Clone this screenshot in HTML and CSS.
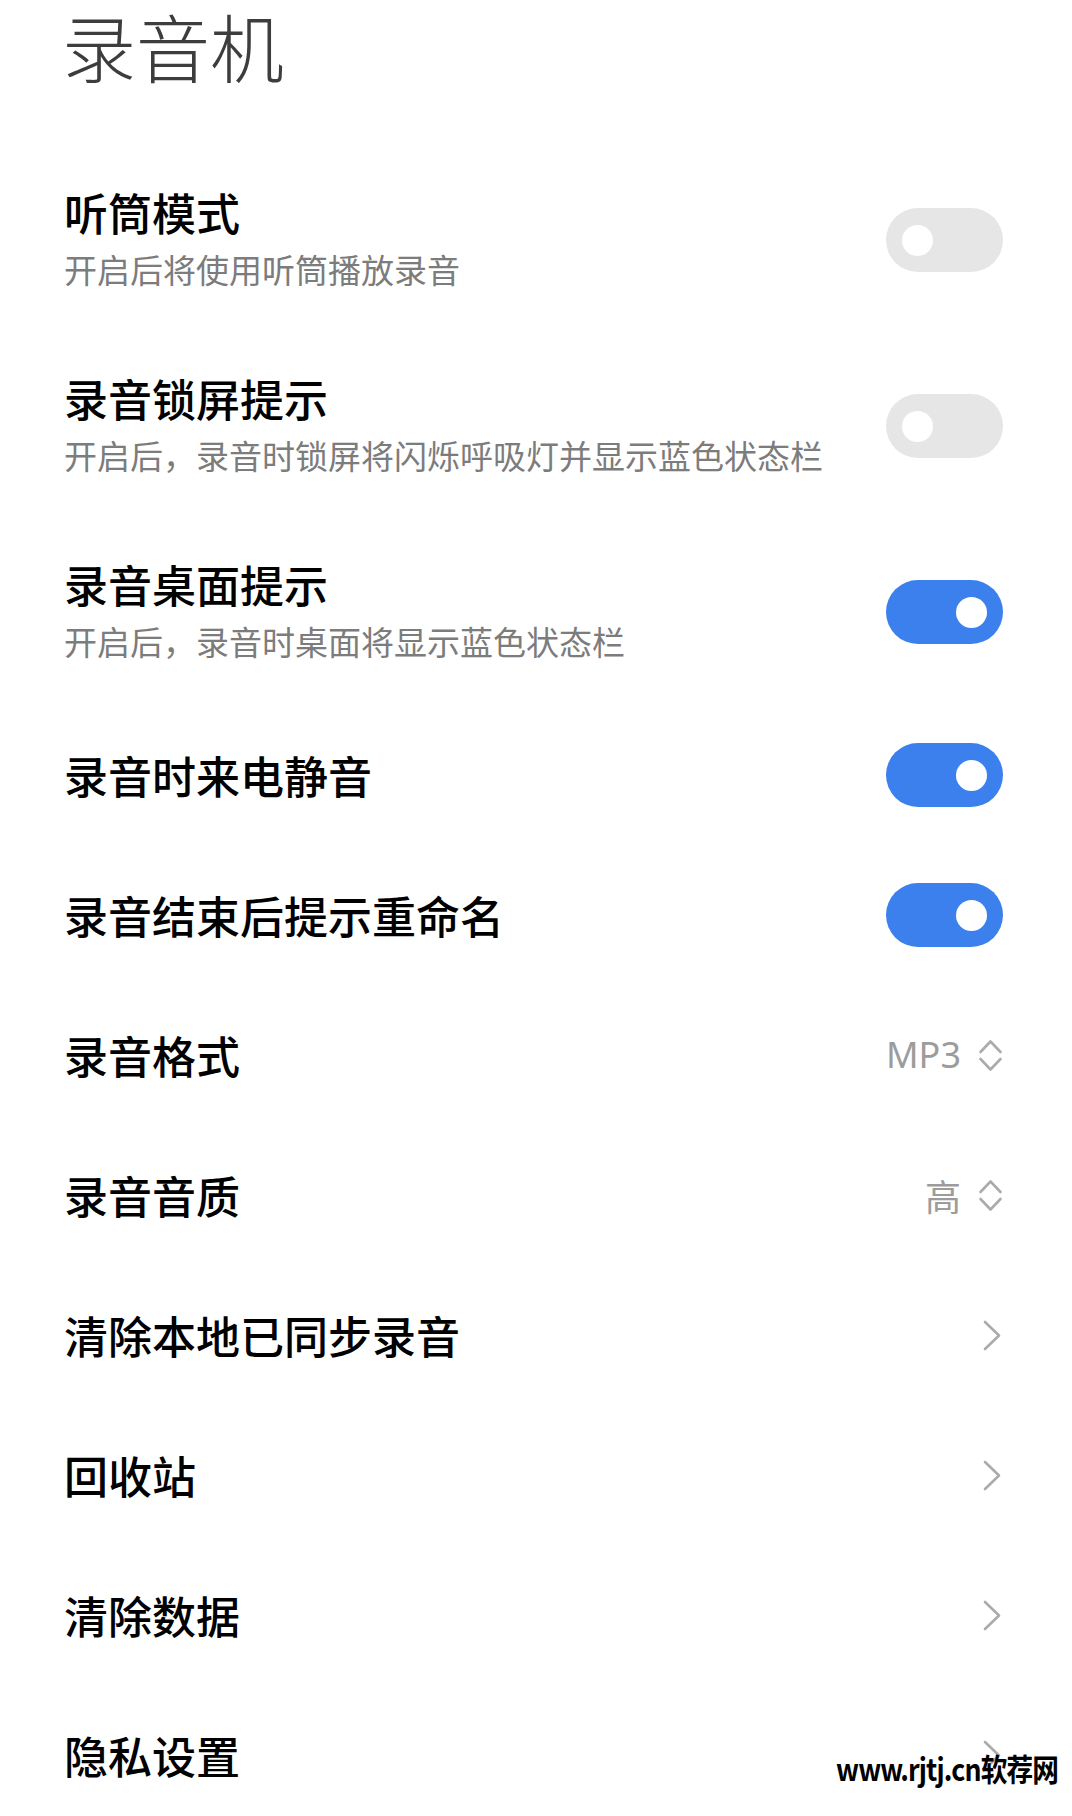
FILE: index.html
```html
<!DOCTYPE html>
<html lang="zh-CN">
  <head>
    <meta charset="UTF-8" />
    <meta name="viewport" content="width=device-width, initial-scale=1.0" />
    <title>录音机</title>
    <link rel="stylesheet" href="styles.css">
  </head>
  <body>
    <div class="page">
      <header class="header">
        <h1>录音机</h1>
      </header>

      <ul class="settings">
        <li class="row row-tall">
          <div class="text">
            <div class="label">听筒模式</div>
            <div class="desc">开启后将使用听筒播放录音</div>
          </div>
          <span class="switch"></span>
        </li>
        <li class="row row-tall">
          <div class="text">
            <div class="label">录音锁屏提示</div>
            <div class="desc">开启后，录音时锁屏将闪烁呼吸灯并显示蓝色状态栏</div>
          </div>
          <span class="switch"></span>
        </li>
        <li class="row row-tall">
          <div class="text">
            <div class="label">录音桌面提示</div>
            <div class="desc">开启后，录音时桌面将显示蓝色状态栏</div>
          </div>
          <span class="switch on"></span>
        </li>
        <li class="row">
          <div class="label">录音时来电静音</div>
          <span class="switch on"></span>
        </li>
        <li class="row">
          <div class="label">录音结束后提示重命名</div>
          <span class="switch on"></span>
        </li>
        <li class="row">
          <div class="label">录音格式</div>
          <div class="picker">
            <span class="value value-latin">MP3</span>
            <svg class="updown" width="25" height="35" viewBox="0 0 25 35">
              <polyline points="2.5,14 12.5,3.5 22.5,14" />
              <polyline points="2.5,21 12.5,31.5 22.5,21" />
            </svg>
          </div>
        </li>
        <li class="row">
          <div class="label">录音音质</div>
          <div class="picker">
            <span class="value">高</span>
            <svg class="updown" width="25" height="35" viewBox="0 0 25 35">
              <polyline points="2.5,14 12.5,3.5 22.5,14" />
              <polyline points="2.5,21 12.5,31.5 22.5,21" />
            </svg>
          </div>
        </li>
        <li class="row">
          <div class="label">清除本地已同步录音</div>
          <svg class="arrow" width="18" height="31" viewBox="0 0 18 31">
            <polyline points="2,2 16,15.5 2,29" />
          </svg>
        </li>
        <li class="row">
          <div class="label">回收站</div>
          <svg class="arrow" width="18" height="31" viewBox="0 0 18 31">
            <polyline points="2,2 16,15.5 2,29" />
          </svg>
        </li>
        <li class="row">
          <div class="label">清除数据</div>
          <svg class="arrow" width="18" height="31" viewBox="0 0 18 31">
            <polyline points="2,2 16,15.5 2,29" />
          </svg>
        </li>
        <li class="row">
          <div class="label">隐私设置</div>
          <svg class="arrow" width="18" height="31" viewBox="0 0 18 31">
            <polyline points="2,2 16,15.5 2,29" />
          </svg>
        </li>
      </ul>

      <div class="watermark">www.rjtj.cn软荐网</div>
    </div>
  </body>
</html>
```

FILE: styles.css
```css
* {
  margin: 0;
  padding: 0;
  box-sizing: border-box;
}

html,
body {
  width: 1072px;
  height: 1816px;
  overflow: hidden;
  background: #fff;
}

body {
  font-family: "Noto Sans CJK SC", "Noto Sans", sans-serif;
  color: #000;
}

.page {
  position: relative;
  height: 100%;
  padding: 0 69px 0 62px;
}

.header {
  height: 147px;
  padding-top: 4px;
}

.header h1 {
  font-size: 74px;
  line-height: 1.1;
  font-weight: 300;
  color: #3d3d3d;
}

.settings {
  list-style: none;
}

.row {
  display: flex;
  align-items: center;
  justify-content: space-between;
  height: 140px;
}

.row-tall {
  height: 186px;
}

.text {
  display: flex;
  flex-direction: column;
  gap: 11px;
  padding-left: 2px;
  margin-top: -4px;
}

.label {
  font-size: 44px;
  line-height: 1.2;
  font-weight: 500;
  color: #000;
  padding-left: 2px;
}

.text .label {
  padding-left: 0;
}

.desc {
  font-size: 33px;
  line-height: 1.2;
  color: #7c7c7c;
}

/* toggle switch */
.switch {
  position: relative;
  flex: none;
  width: 117px;
  height: 64px;
  border-radius: 32px;
  background: #e6e6e6;
}

.switch::after {
  content: "";
  position: absolute;
  top: 17px;
  left: 16px;
  width: 31px;
  height: 31px;
  border-radius: 50%;
  background: #fff;
}

.switch.on {
  background: #3b80ec;
}

.switch.on::after {
  left: auto;
  right: 16px;
}

.picker {
  display: flex;
  align-items: center;
  gap: 17px;
}

.value {
  font-size: 36px;
  line-height: 1;
  color: #9c9c9c;
}

.value-latin {
  font-family: "Noto Sans", sans-serif;
}

.updown polyline,
.arrow polyline {
  fill: none;
  stroke: #ababab;
  stroke-width: 2.6;
  stroke-linecap: round;
  stroke-linejoin: round;
}

.arrow {
  margin-right: 2px;
}

.watermark {
  position: absolute;
  left: 836px;
  top: 1749px;
  font-size: 31px;
  line-height: 1.2;
  font-weight: 700;
  color: #000;
  letter-spacing: -1px;
  white-space: nowrap;
  transform: scaleX(0.86);
  transform-origin: left center;
}
```
